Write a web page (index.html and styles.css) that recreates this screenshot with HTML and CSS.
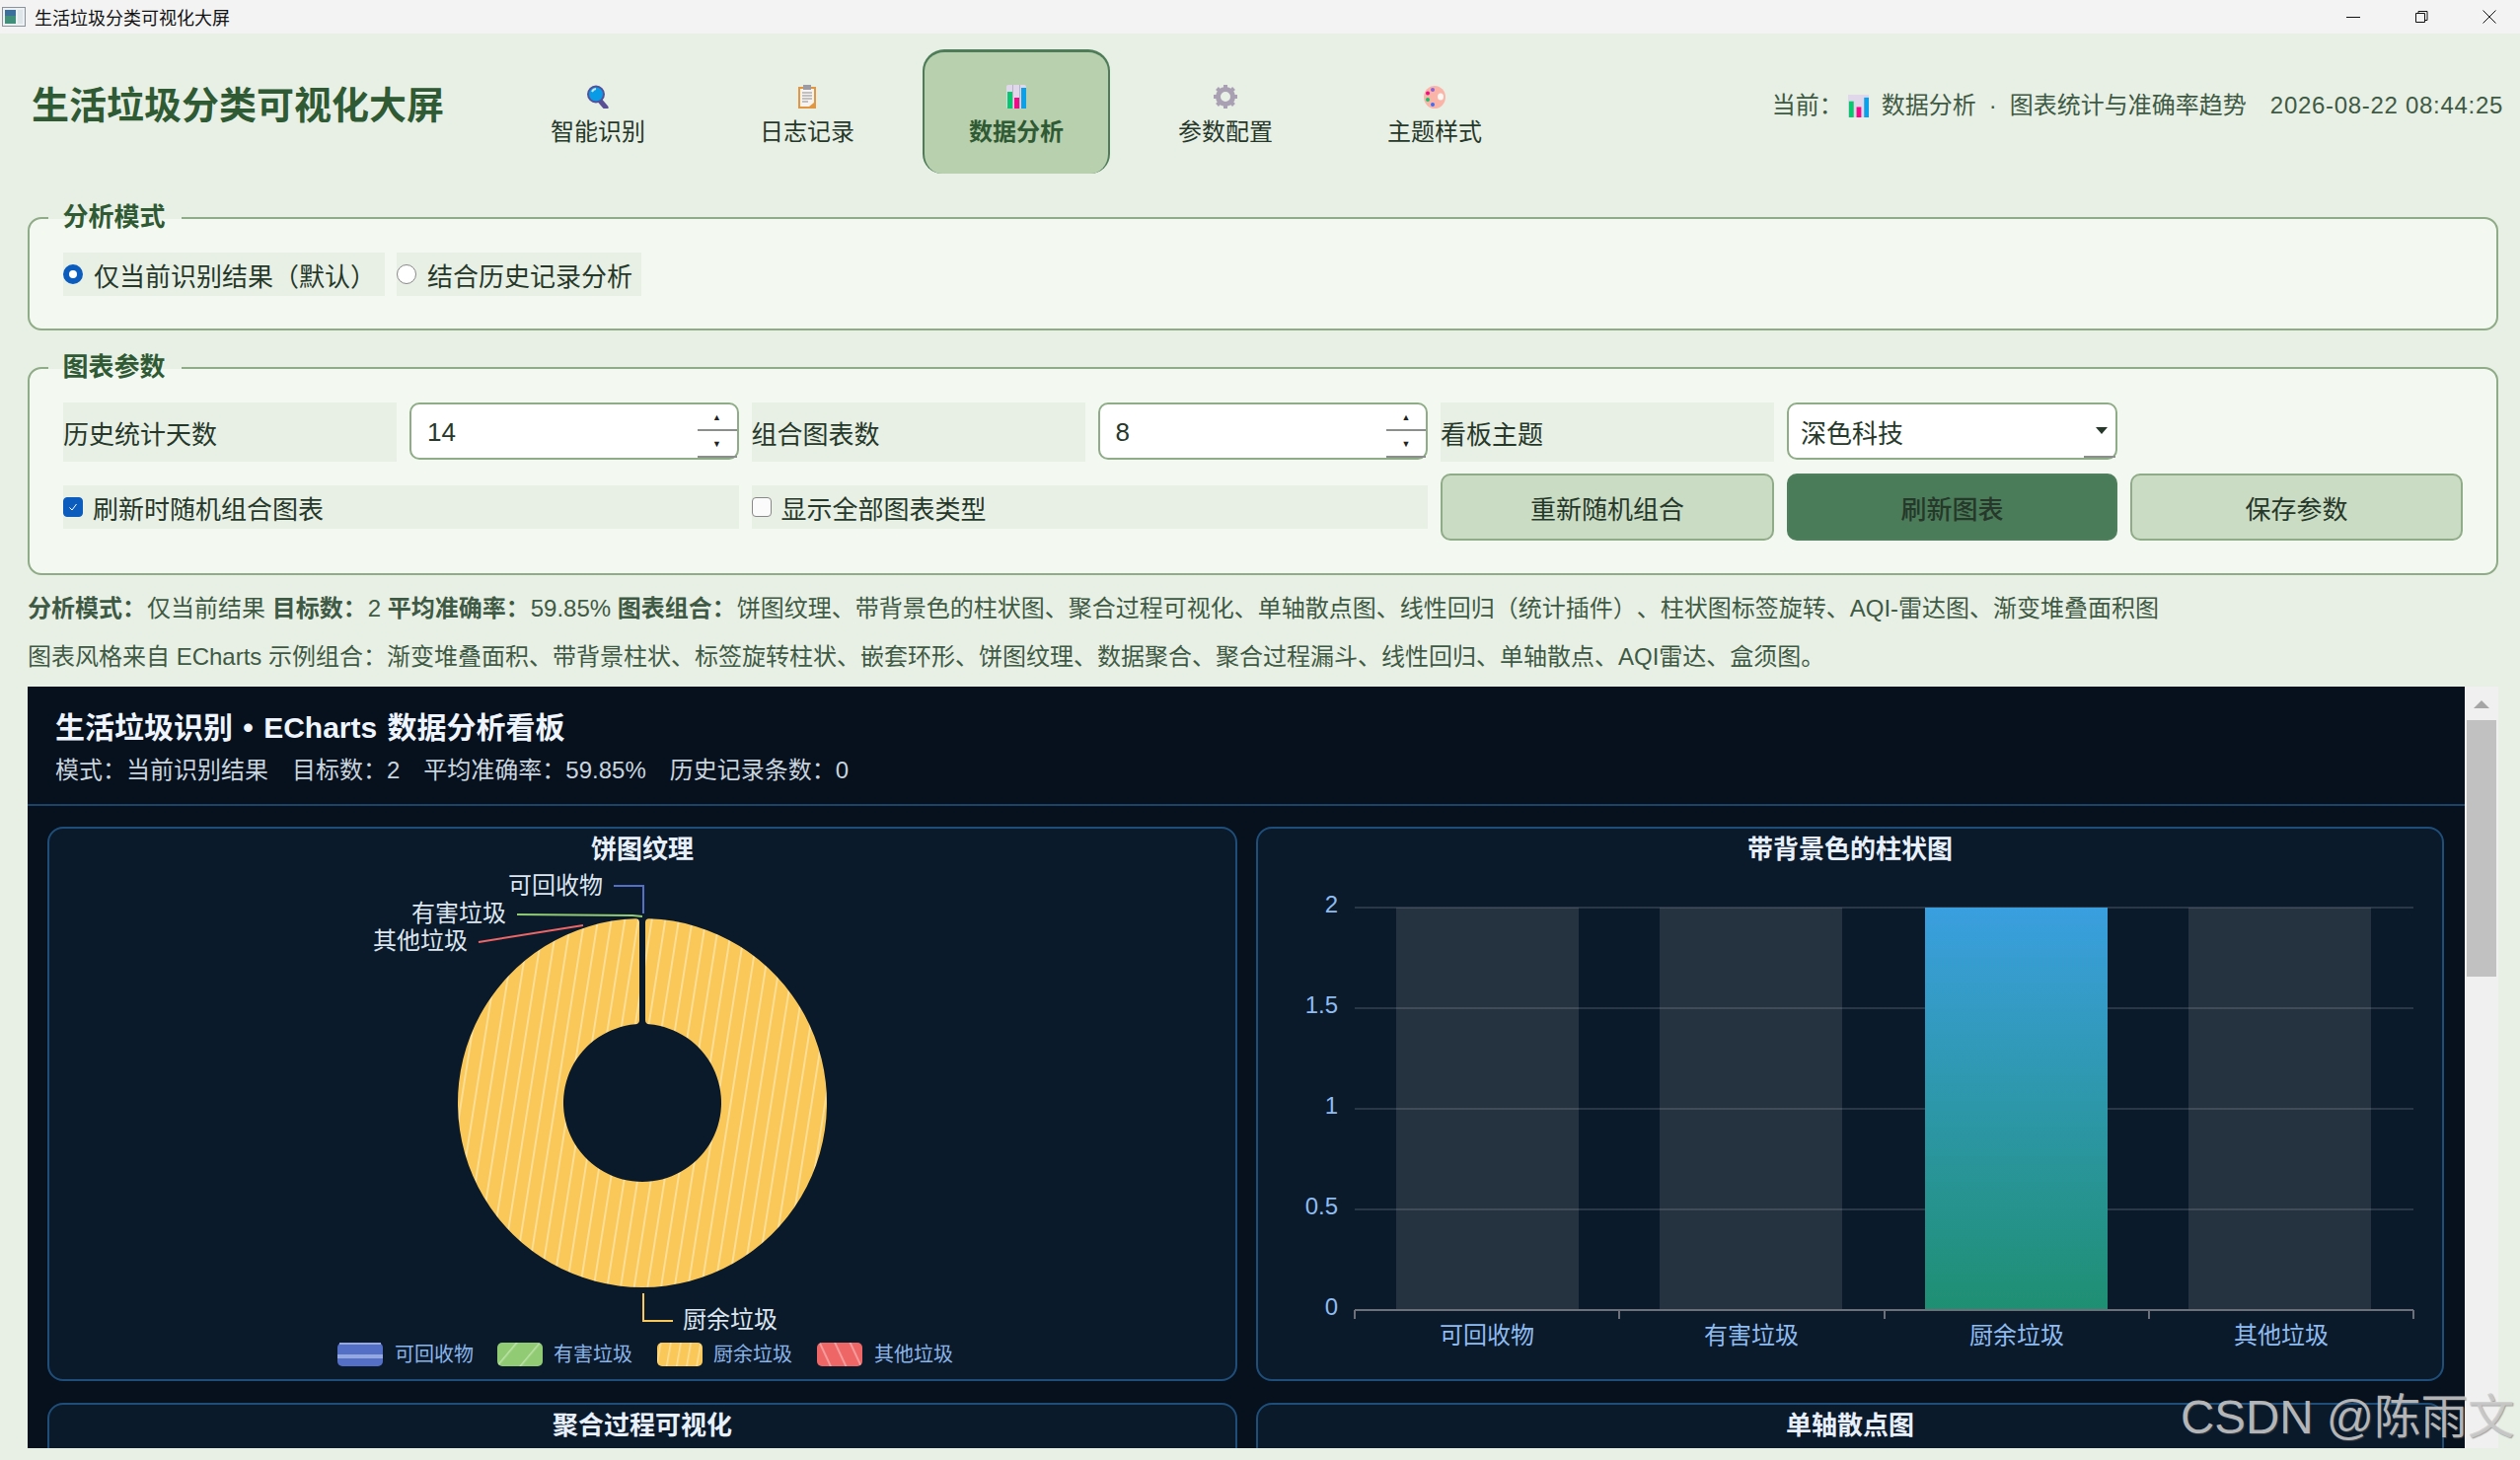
FILE: index.html
```html
<!DOCTYPE html>
<html lang="zh-CN">

<head>
    <meta charset="UTF-8">
    <title>生活垃圾分类可视化大屏</title>
    <link rel="stylesheet" href="styles.css">
</head>

<body>
    <div id="title-bar">
        <svg class="app-icon" width="24" height="20" viewBox="0 0 24 20">
            <rect x="0.5" y="0.5" width="23" height="19" fill="#eef1f4" stroke="#8b949c"/>
            <rect x="3" y="3" width="11" height="14" fill="#3f8f7a"/>
            <rect x="3" y="3" width="11" height="6" fill="#3d6f9c"/>
            <rect x="16" y="3" width="5" height="14" fill="#dfe6ea"/>
        </svg>
        <span class="app-name">生活垃圾分类可视化大屏</span>
        <div class="win-controls">
            <svg width="16" height="16" viewBox="0 0 16 16"><path d="M1 8.500h14" stroke="#111" stroke-width="1"/></svg>
            <svg width="16" height="16" viewBox="0 0 16 16"><path d="M2.500 4.500h9v9h-9zM5 4.500v-2h9v9h-2.500" fill="none" stroke="#111"/></svg>
            <svg width="16" height="16" viewBox="0 0 16 16"><path d="M1.500 1.500l13 13M14.500 1.500l-13 13" stroke="#111"/></svg>
        </div>
    </div>

    <div id="header">
        <h1 class="app-title">生活垃圾分类可视化大屏</h1>
        <nav class="nav">
            <div class="nav-item">
                <svg class="nav-icon" viewBox="0 0 24 24">
                    <path d="M14 16l6 7" stroke="#5b4f96" stroke-width="5" stroke-linecap="round"/>
                    <circle cx="10" cy="9.500" r="8" fill="#0a9be6" stroke="#55509a" stroke-width="2"/>
                    <path d="M6 7a5 5 0 0 1 4-3" stroke="#bfe8fb" stroke-width="2" fill="none"/>
                </svg>
                <span>智能识别</span>
            </div>
            <div class="nav-item">
                <svg class="nav-icon" viewBox="0 0 24 24">
                    <rect x="3" y="2" width="18" height="22" fill="#e2963f"/>
                    <path d="M5 4h14v14l-5 4H5z" fill="#f6f3f1"/>
                    <rect x="8" y="0" width="8" height="5" fill="#9c9aa3"/>
                    <path d="M7 8h10M7 11h10M7 14h10M7 17h6" stroke="#8d8b92" stroke-width="1.200"/>
                </svg>
                <span>日志记录</span>
            </div>
            <div class="nav-item active">
                <svg class="nav-icon" viewBox="0 0 24 24">
                    <rect x="2" y="0" width="20" height="24" rx="2" fill="#e0d8ea"/>
                    <path d="M8.500 0v24M15.500 0v24" stroke="#b9b3c6"/>
                    <rect x="3" y="7" width="5" height="17" fill="#08c76f"/>
                    <rect x="10" y="13" width="5" height="11" fill="#ef0c86"/>
                    <rect x="17" y="3" width="5" height="21" fill="#0aa0ea"/>
                </svg>
                <span>数据分析</span>
            </div>
            <div class="nav-item">
                <svg class="nav-icon" viewBox="0 0 24 24">
                    <circle cx="12" cy="12" r="7.500" fill="none" stroke="#aaa0b4" stroke-width="5"/>
                    <path d="M12 0v24M0 12h24M3.500 3.500l17 17M20.500 3.500l-17 17" stroke="#aaa0b4" stroke-width="4" stroke-dasharray="4.500 15 4.500"/>
                </svg>
                <span>参数配置</span>
            </div>
            <div class="nav-item">
                <svg class="nav-icon" viewBox="0 0 24 24">
                    <ellipse cx="12" cy="12.500" rx="11" ry="11.500" fill="#fbb5a8"/>
                    <ellipse cx="18" cy="12" rx="3" ry="3.500" fill="#fdf6f2"/>
                    <circle cx="10" cy="5" r="2" fill="#8a63d8"/>
                    <circle cx="5" cy="8.500" r="2" fill="#ef0c86"/>
                    <circle cx="5" cy="15" r="2" fill="#08c76f"/>
                    <circle cx="10" cy="20" r="2" fill="#3f6cf0"/>
                </svg>
                <span>主题样式</span>
            </div>
        </nav>
        <div class="status">
            <span>当前：</span>
            <svg class="status-icon" viewBox="0 0 24 24">
                <rect x="1" y="0" width="22" height="24" fill="#e0d8ea"/>
                <rect x="2" y="7" width="5" height="17" fill="#08c76f"/>
                <rect x="10" y="13" width="5" height="11" fill="#ef0c86"/>
                <rect x="18" y="3" width="5" height="21" fill="#0aa0ea"/>
            </svg>
            <span>数据分析</span>
            <span class="status-dot">·</span>
            <span>图表统计与准确率趋势</span>
            <span class="status-time">2026-08-22 08:44:25</span>
        </div>
    </div>

    <div id="content">
        <fieldset class="group group-mode">
            <legend>分析模式</legend>
            <div class="radio-row">
                <div class="opt">
                    <span class="radio checked"></span>
                    <span>仅当前识别结果（默认）</span>
                </div>
                <div class="opt">
                    <span class="radio"></span>
                    <span>结合历史记录分析</span>
                </div>
            </div>
        </fieldset>

        <fieldset class="group group-params">
            <legend>图表参数</legend>
            <div class="param-grid">
                <div class="field-label">历史统计天数</div>
                <div class="spin">
                    <span class="spin-value">14</span>
                    <div class="spin-btns">
                        <span class="spin-btn">▲</span>
                        <span class="spin-btn">▼</span>
                    </div>
                </div>
                <div class="field-label">组合图表数</div>
                <div class="spin">
                    <span class="spin-value">8</span>
                    <div class="spin-btns">
                        <span class="spin-btn">▲</span>
                        <span class="spin-btn">▼</span>
                    </div>
                </div>
                <div class="field-label">看板主题</div>
                <div class="combo">
                    <span>深色科技</span>
                    <span class="combo-btn"><span class="combo-arrow"></span></span>
                </div>

                <div class="opt check-opt">
                    <span class="check checked">
                        <svg width="12" height="12" viewBox="0 0 12 12"><path d="M2.500 6.500l2.500 2.500 4.500-6" fill="none" stroke="#fff" stroke-width="1"/></svg>
                    </span>
                    <span>刷新时随机组合图表</span>
                </div>
                <div class="opt check-opt">
                    <span class="check"></span>
                    <span>显示全部图表类型</span>
                </div>
                <div class="btn">重新随机组合</div>
                <div class="btn primary">刷新图表</div>
                <div class="btn">保存参数</div>
            </div>
        </fieldset>

        <div class="summary">
            <p><b>分析模式：</b>仅当前结果 <b>目标数：</b>2 <b>平均准确率：</b>59.85% <b>图表组合：</b>饼图纹理、带背景色的柱状图、聚合过程可视化、单轴散点图、线性回归（统计插件）、柱状图标签旋转、AQI-雷达图、渐变堆叠面积图</p>
            <p>图表风格来自 ECharts 示例组合：渐变堆叠面积、带背景柱状、标签旋转柱状、嵌套环形、饼图纹理、数据聚合、聚合过程漏斗、线性回归、单轴散点、AQI雷达、盒须图。</p>
        </div>

        <div class="board-wrap">
            <div class="board">
                <div class="board-head">
                    <div class="board-title">生活垃圾识别 • ECharts 数据分析看板</div>
                    <div class="board-sub">
                        <span>模式：当前识别结果</span>
                        <span>目标数：2</span>
                        <span>平均准确率：59.85%</span>
                        <span>历史记录条数：0</span>
                    </div>
                </div>
                <div class="cards">
                    <div class="card">
                        <div class="card-title">饼图纹理</div>
                        <svg class="chart" width="1200" height="512" viewBox="0 0 1200 512">
                            <defs>
                                <pattern id="hatch-yellow" width="13.500" height="40" patternUnits="userSpaceOnUse" patternTransform="rotate(9)">
                                    <rect width="13.500" height="40" fill="#fac858"/>
                                    <rect width="1.800" height="40" fill="#fde09c"/>
                                </pattern>
                                <pattern id="sw-green" width="18" height="18" patternUnits="userSpaceOnUse" patternTransform="rotate(40)">
                                    <rect width="18" height="18" fill="#91cc75"/>
                                    <rect width="1.500" height="18" fill="#bde3a8"/>
                                </pattern>
                                <pattern id="sw-yellow" width="10" height="18" patternUnits="userSpaceOnUse" patternTransform="rotate(10)">
                                    <rect width="10" height="18" fill="#fac858"/>
                                    <rect width="1.500" height="18" fill="#fde09c"/>
                                </pattern>
                                <pattern id="sw-red" width="14" height="18" patternUnits="userSpaceOnUse" patternTransform="rotate(-25)">
                                    <rect width="14" height="18" fill="#ee6666"/>
                                    <rect width="2" height="18" fill="#f49b9b"/>
                                </pattern>
                            </defs>
                            <path fill="url(#hatch-yellow)" d="M606 45.130A187 187 0 1 1 592 45.130Q596 45 596 49L596 148Q596 152 592 152.310A80 80 0 1 0 606 152.310Q602 152 602 148L602 49Q602 45 606 45.130Z"/>
                            <g fill="none" stroke-width="2">
                                <path d="M570 12H600V40" stroke="#5470c6"/>
                                <path d="M472 41L589 42L599 43" stroke="#91cc75"/>
                                <path d="M433 69L539 52" stroke="#ee6666"/>
                                <path d="M600 425V453H630" stroke="#fac858"/>
                            </g>
                            <g class="pie-label">
                                <text x="559" y="20" text-anchor="end">可回收物</text>
                                <text x="461" y="48" text-anchor="end">有害垃圾</text>
                                <text x="422" y="76" text-anchor="end">其他垃圾</text>
                                <text x="640" y="460">厨余垃圾</text>
                            </g>
                            <rect x="290" y="475" width="46" height="24" rx="5" fill="#5470c6"/>
                            <rect x="292" y="475" width="42" height="2" fill="#96a8e0"/>
                            <rect x="290" y="487" width="46" height="4" fill="#96a8e0"/>
                            <rect x="452" y="475" width="46" height="24" rx="5" fill="url(#sw-green)"/>
                            <rect x="614" y="475" width="46" height="24" rx="5" fill="url(#sw-yellow)"/>
                            <rect x="776" y="475" width="46" height="24" rx="5" fill="url(#sw-red)"/>
                            <g class="legend-label">
                                <text x="348" y="494">可回收物</text>
                                <text x="509" y="494">有害垃圾</text>
                                <text x="671" y="494">厨余垃圾</text>
                                <text x="834" y="494">其他垃圾</text>
                            </g>
                        </svg>
                    </div>
                    <div class="card">
                        <div class="card-title">带背景色的柱状图</div>
                        <svg class="chart" width="1200" height="512" viewBox="0 0 1200 512">
                            <defs>
                                <linearGradient id="bar-fill" x1="0" y1="0" x2="0" y2="1">
                                    <stop offset="0" stop-color="#3a9fdf"/>
                                    <stop offset="1" stop-color="#1f8f72"/>
                                </linearGradient>
                            </defs>
                            <g fill="#253240">
                                <rect x="138" y="34" width="185" height="408"/>
                                <rect x="405" y="34" width="185" height="408"/>
                                <rect x="941" y="34" width="185" height="408"/>
                            </g>
                            <path d="M96 34H1169M96 136H1169M96 238H1169M96 340H1169" stroke="#fff" stroke-opacity="0.130" stroke-width="2"/>
                            <rect x="674" y="34" width="185" height="408" fill="url(#bar-fill)"/>
                            <path d="M96 442H1169M96 442v9M364 442v9M633 442v9M901 442v9M1169 442v9" stroke="#6e7079" stroke-width="2" fill="none"/>
                            <g class="axis-label" text-anchor="end">
                                <text x="79" y="39">2</text>
                                <text x="79" y="141">1.5</text>
                                <text x="79" y="243">1</text>
                                <text x="79" y="345">0.5</text>
                                <text x="79" y="447">0</text>
                            </g>
                            <g class="axis-label" text-anchor="middle">
                                <text x="230" y="476">可回收物</text>
                                <text x="498" y="476">有害垃圾</text>
                                <text x="767" y="476">厨余垃圾</text>
                                <text x="1035" y="476">其他垃圾</text>
                            </g>
                        </svg>
                    </div>
                    <div class="card">
                        <div class="card-title">聚合过程可视化</div>
                    </div>
                    <div class="card">
                        <div class="card-title">单轴散点图</div>
                    </div>
                </div>
            </div>
            <div class="v-scroll">
                <span class="v-arrow"></span>
                <span class="v-thumb"></span>
            </div>
        </div>
    </div>

    <div class="watermark">CSDN @陈雨文</div>
</body>

</html>
```

FILE: styles.css
```css
* {
    box-sizing: border-box;
}

html,
body {
    margin: 0;
    padding: 0;
    width: 2554px;
    height: 1480px;
    overflow: hidden;
}

body {
    position: relative;
    background-color: #e8f0e5;
    color: #26382a;
    font-family: "Liberation Sans", "Noto Sans CJK SC", sans-serif;
    font-size: 24px;
    text-spacing-trim: space-all;
}

#title-bar {
    height: 34px;
    padding-left: 2px;
    display: flex;
    align-items: center;
    background-color: #f3f3f3;
    color: #111;
    font-size: 18px;
}

.app-icon {
    margin-right: 9px;
}

.win-controls {
    margin-left: auto;
    display: flex;
    gap: 53px;
    padding-right: 23px;
}

#header {
    height: 171px;
    padding-left: 32px;
    display: flex;
    align-items: flex-start;
}

.app-title {
    width: 479px;
    margin: 47px 0 0;
    color: #2f5a34;
    font-size: 38px;
    line-height: 52px;
    font-weight: 700;
}

.nav {
    display: flex;
    gap: 22px;
    padding-top: 16px;
}

.nav-item {
    width: 190px;
    height: 126px;
    padding-top: 36px;
    display: flex;
    flex-direction: column;
    align-items: center;
    line-height: 34px;
}

.nav-item.active {
    border: 2px solid #4e7c58;
    border-top-width: 3px;
    border-bottom: none;
    border-radius: 22px 22px 20px 20px;
    background-color: #b8d0ae;
    padding-top: 33px;
    color: #2f5a34;
    font-weight: 700;
}

.nav-icon {
    width: 24px;
    height: 24px;
    margin-bottom: 7px;
}

.status {
    margin-left: auto;
    margin-top: 56px;
    padding-right: 17px;
    display: flex;
    align-items: center;
    color: #3f5a44;
    line-height: 34px;
}

.status-icon {
    width: 23px;
    height: 23px;
    margin: 0 12px 0 4px;
}

.status-dot {
    margin: 0 13px;
}

.status-time {
    margin-left: 24px;
    letter-spacing: 0.7px;
}

#content {
    padding: 0 22px 0 28px;
}

.group {
    margin: 0;
    padding: 0 34px;
    min-width: 0;
    border: 2.500px solid #8fab88;
    border-radius: 14px;
    background-color: #f3f8f1;
    background-clip: padding-box;
    font-size: 26px;
}

.group legend {
    margin-left: -15.500px;
    padding: 0 16px 2px 15px;
    color: #2f5a34;
    font-size: 26px;
    font-weight: 700;
    line-height: 30px;
}

.group-mode {
    height: 130px;
}

.group-params {
    height: 226px;
    margin-top: 22px;
}

.radio-row {
    display: flex;
    gap: 12px;
    padding-top: 19px;
}

.opt {
    height: 44px;
    display: flex;
    align-items: center;
    background-color: #e8f0e5;
    padding-right: 9px;
}

.radio {
    width: 20px;
    height: 20px;
    margin-right: 11px;
    border: 1px solid #888;
    border-radius: 50%;
    background-color: #fff;
}

.radio.checked {
    border: 6px solid #0b5cbd;
}

.param-grid {
    display: grid;
    grid-template-columns: 338px 333.500px 338px 334.500px 338px 335px 337px;
    grid-template-rows: 60px 68px;
    column-gap: 13px;
    row-gap: 12px;
    padding-top: 19px;
}

.field-label {
    display: flex;
    align-items: center;
    background-color: #e8f0e5;
}

.spin,
.combo {
    height: 58px;
    display: flex;
    align-items: center;
    border: 2.500px solid #8fab88;
    border-radius: 10px;
    background-color: #fff;
}

.spin {
    padding-left: 16px;
}

.spin-value {
    flex: 1;
    padding-top: 2px;
}

.spin-btns {
    width: 40px;
    height: 100%;
    display: flex;
    flex-direction: column;
}

.spin-btn {
    flex: 1;
    display: flex;
    align-items: center;
    justify-content: center;
    border-bottom: 2px solid #8b8f8c;
    color: #222;
    font-size: 9px;
}

.combo {
    padding-left: 12px;
    justify-content: space-between;
}

.combo-btn {
    width: 32px;
    height: 100%;
    padding-right: 8px;
    display: flex;
    align-items: center;
    justify-content: flex-end;
    border-bottom: 2px solid #8b8f8c;
}

.combo-arrow {
    border-left: 6px solid transparent;
    border-right: 6px solid transparent;
    border-top: 7px solid #26382a;
}

.check-opt {
    grid-column: span 2;
    align-self: center;
}

.check {
    width: 20px;
    height: 20px;
    margin-right: 10px;
    display: flex;
    align-items: center;
    justify-content: center;
    border: 1px solid #888;
    border-radius: 4px;
    background-color: #fbfbfb;
}

.check.checked {
    border-color: #0b5cbd;
    background-color: #0b5cbd;
}

.btn {
    display: flex;
    align-items: center;
    justify-content: center;
    border: 2.500px solid #8fab88;
    border-radius: 10px;
    background-color: #cadcc3;
}

.btn.primary {
    border-color: #4f7f5c;
    background-color: #4b7c59;
    font-weight: 500;
}

.summary {
    margin-top: 9px;
    color: #3f5a44;
}

.summary p {
    margin: 0;
    height: 49px;
    line-height: 49px;
}

.summary b {
    margin-right: 1px;
}

.board-wrap {
    height: 772px;
    margin-top: 6px;
    display: flex;
    overflow: hidden;
}

.board {
    width: 2470px;
    padding-bottom: 20px;
    background-color: #07111e;
}

.board-head {
    height: 121px;
    padding: 21px 28px 0;
    border-bottom: 2px solid #1c4468;
    color: #eef5ff;
}

.board-title {
    font-size: 30px;
    font-weight: 700;
    line-height: 42px;
    word-spacing: 2px;
}

.board-sub {
    display: flex;
    gap: 24px;
    color: #c8d4de;
    line-height: 44px;
}

.cards {
    display: grid;
    grid-template-columns: 1206px 1204px;
    grid-auto-rows: 562px;
    column-gap: 19px;
    row-gap: 22px;
    padding: 21px 20px;
}

.card {
    border: 2px solid #1f4e79;
    border-radius: 16px;
    background-color: #0b1a2b;
}

.card-title {
    height: 46px;
    text-align: center;
    color: #e6effa;
    font-size: 26px;
    font-weight: 700;
    line-height: 42px;
}

.chart {
    display: block;
    margin-left: 2px;
    overflow: visible;
}

.pie-label {
    fill: #dce6f0;
    font-size: 24px;
}

.legend-label {
    fill: #8ab4e8;
    font-size: 20px;
}

.axis-label {
    fill: #8fbcf0;
    font-size: 24px;
}

.v-scroll {
    width: 34px;
    height: 100%;
    display: flex;
    flex-direction: column;
    align-items: center;
    background-color: #f0f0f0;
}

.v-arrow {
    margin-top: 14px;
    border-left: 8px solid transparent;
    border-right: 8px solid transparent;
    border-bottom: 8px solid #a6a6a6;
}

.v-thumb {
    width: 30px;
    height: 260px;
    margin-top: 12px;
    background-color: #c1c1c1;
}

/* sits over the finished screenshot */
.watermark {
    position: absolute;
    left: 2210px;
    top: 1402px;
    color: rgba(205, 205, 205, 0.85);
    text-shadow: 1px 1px 1px rgba(90, 90, 90, 0.5);
    font-size: 47.500px;
    line-height: 70px;
    white-space: nowrap;
}
```
